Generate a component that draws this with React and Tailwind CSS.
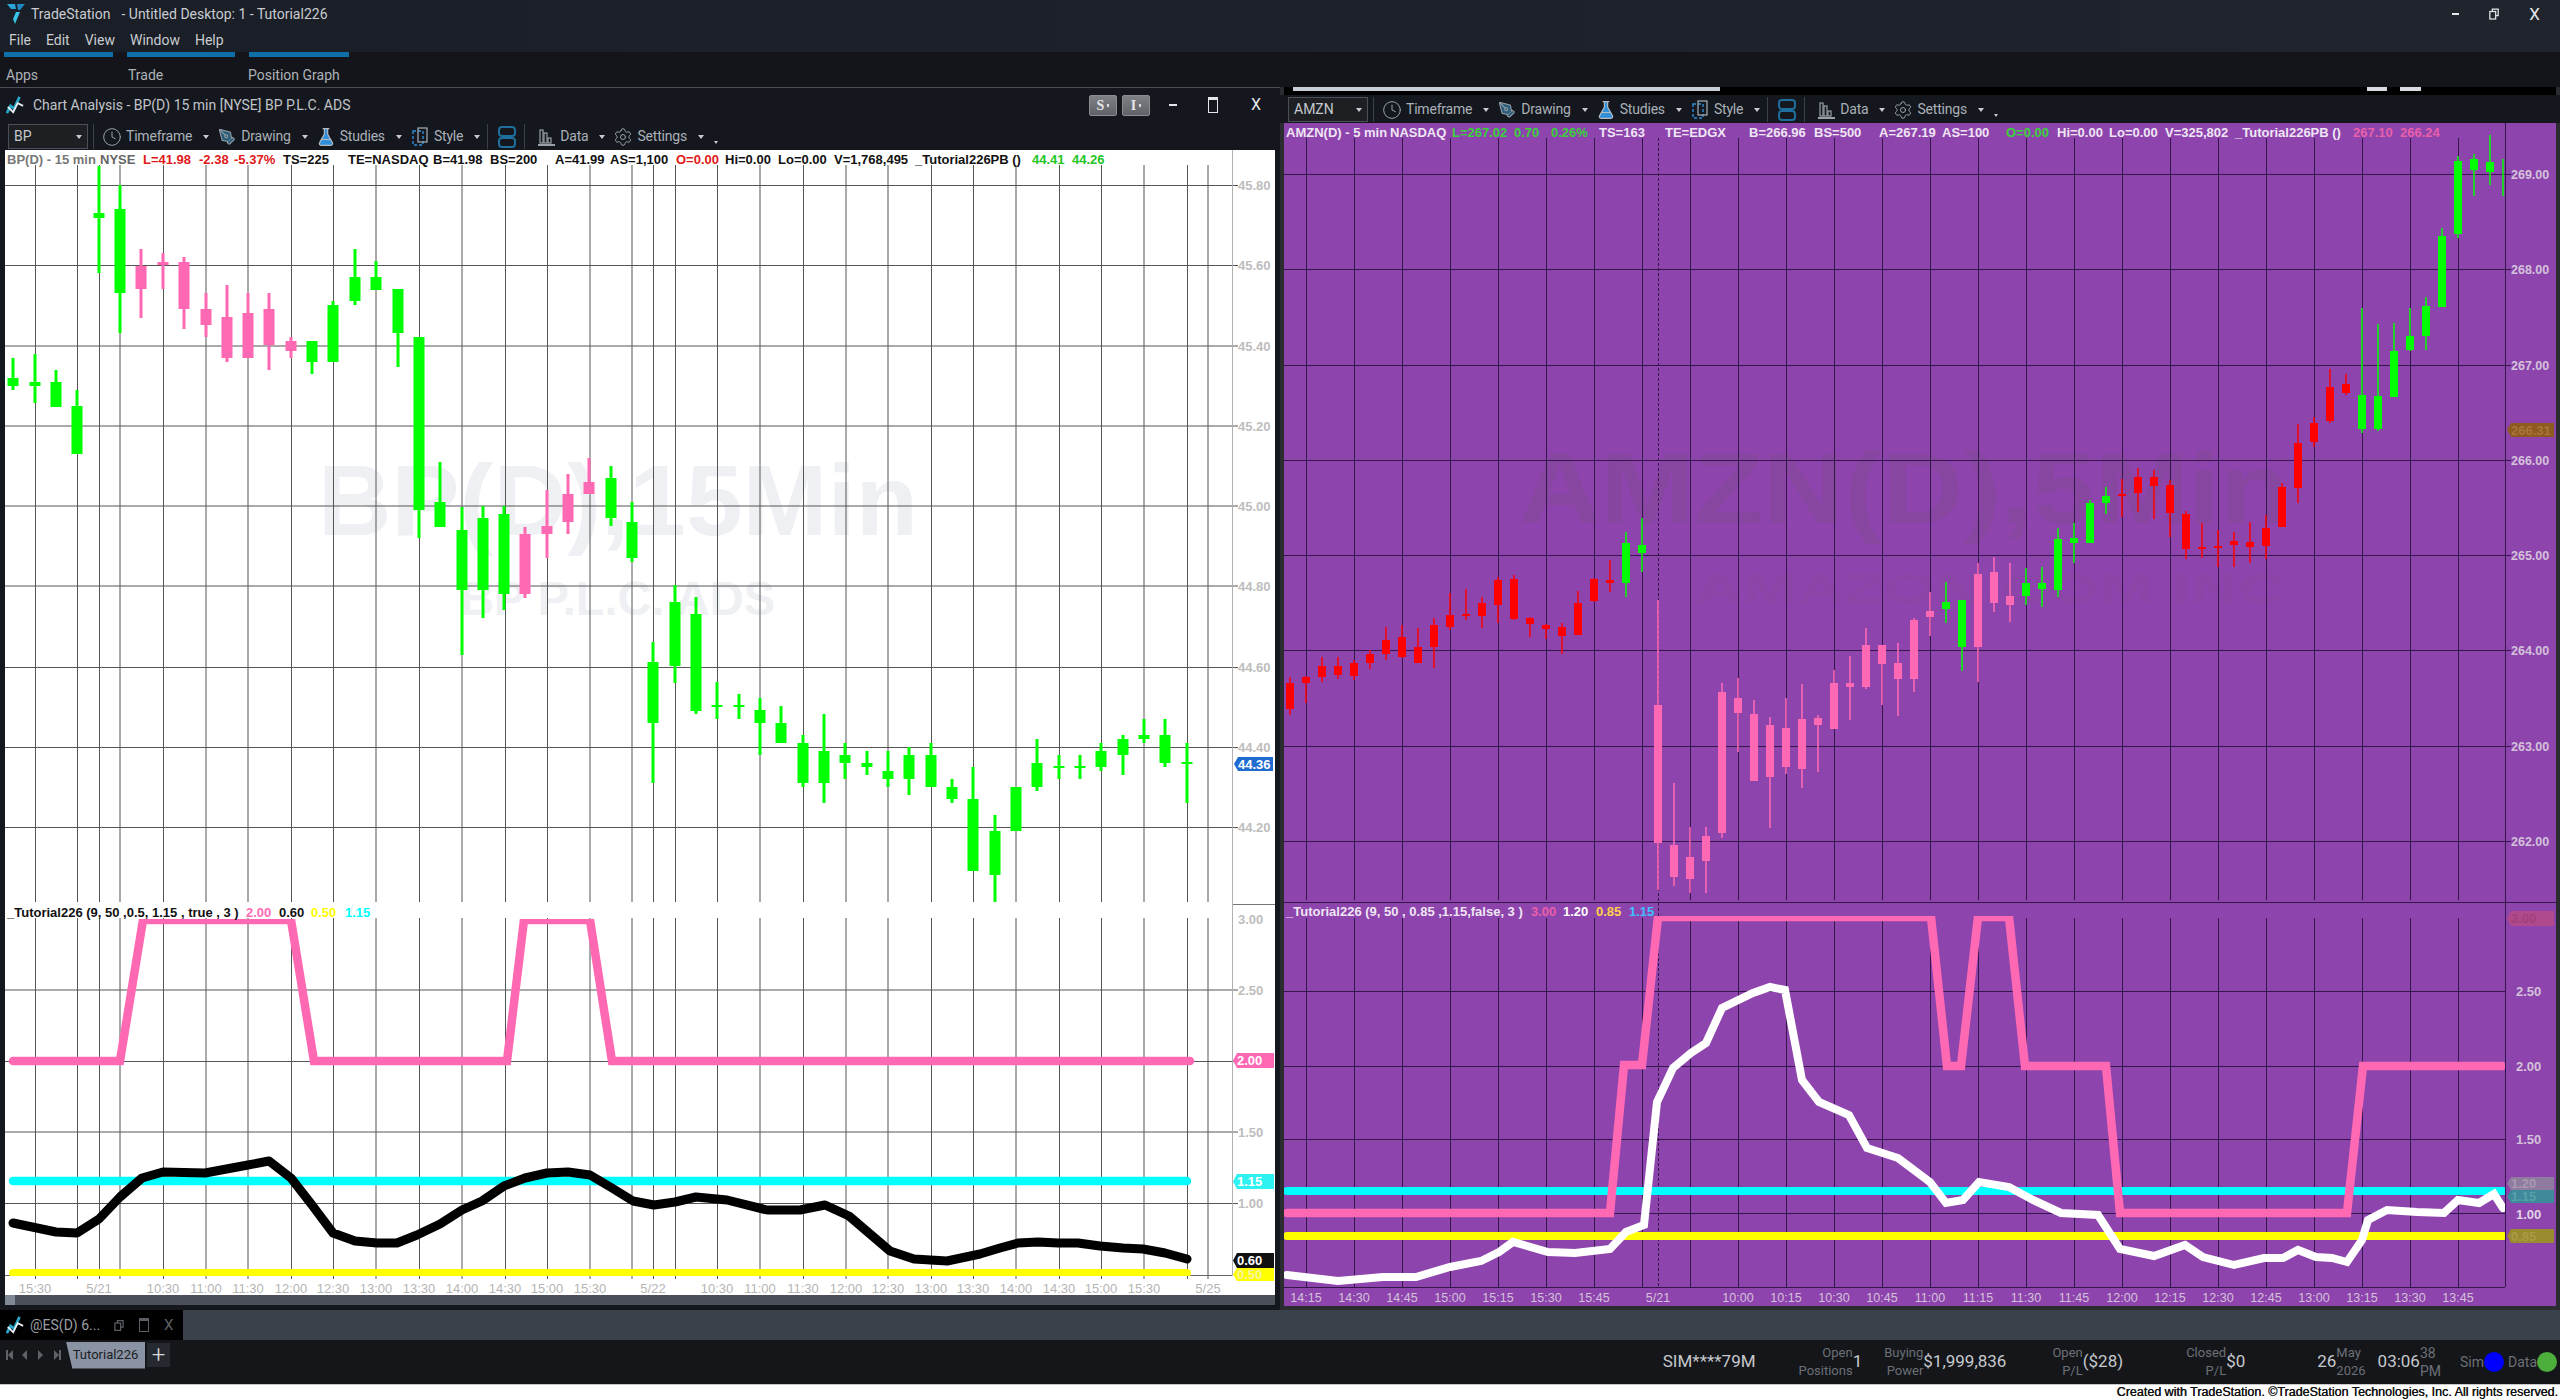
import { Clock, FlaskConical, PenTool, Settings } from 'lucide-react';

const GREEN = '#00ff00';
const PINK = '#ff69b4';
const RED = '#ff0000';

// [x, wickTop, wickBottom, bodyTop, bodyBottom]
const bpUp = [
  [13, 358, 390, 378, 386], [35, 354, 403, 382, 386], [56, 370, 407, 382, 407], [77, 390, 454, 406, 454],
  [99, 166, 273, 213, 218], [120, 185, 333, 209, 293], [312, 341, 374, 341, 362], [333, 301, 362, 305, 362],
  [355, 249, 305, 277, 301], [376, 261, 290, 277, 290], [398, 289, 367, 289, 333], [419, 337, 538, 337, 510],
  [440, 462, 527, 502, 527], [462, 507, 655, 530, 590], [483, 506, 618, 518, 590], [504, 506, 610, 514, 594],
  [611, 466, 526, 478, 518], [632, 502, 562, 522, 558], [653, 642, 783, 662, 723], [675, 585, 683, 602, 666],
  [696, 597, 714, 614, 711], [717, 682, 719, 705, 707], [739, 694, 719, 705, 707], [760, 698, 755, 710, 723],
  [781, 706, 743, 723, 743], [803, 735, 787, 743, 783], [824, 714, 803, 751, 783], [845, 743, 779, 755, 763],
  [867, 751, 775, 763, 767], [888, 751, 787, 771, 779], [909, 747, 795, 755, 779], [931, 743, 787, 755, 787],
  [952, 779, 803, 787, 799], [973, 767, 871, 799, 871], [995, 815, 902, 831, 875], [1016, 787, 831, 787, 831],
  [1037, 739, 791, 763, 787], [1059, 755, 779, 766, 768], [1080, 755, 779, 766, 768], [1101, 743, 771, 751, 767],
  [1123, 735, 775, 739, 755], [1144, 719, 743, 735, 739], [1165, 719, 767, 735, 763], [1187, 743, 803, 762, 764],
];
const bpDown = [
  [141, 249, 318, 266, 289], [163, 253, 289, 262, 265], [184, 257, 329, 262, 309], [206, 293, 337, 309, 325],
  [227, 285, 362, 317, 358], [248, 293, 358, 313, 358], [269, 293, 370, 309, 345], [291, 337, 358, 341, 351],
  [525, 527, 598, 534, 594], [547, 490, 558, 526, 534], [568, 474, 534, 494, 522], [589, 458, 494, 482, 494],
];
const amznRed = [
  [1290, 677, 715, 683, 709], [1306, 676, 703, 677, 683], [1322, 657, 682, 666, 677], [1338, 657, 679, 666, 675],
  [1354, 660, 680, 663, 676], [1370, 650, 669, 654, 663], [1386, 627, 660, 640, 654], [1402, 625, 658, 637, 657],
  [1418, 628, 663, 647, 663], [1434, 618, 668, 625, 647], [1450, 593, 630, 615, 627], [1466, 589, 620, 614, 616],
  [1482, 597, 628, 603, 616], [1498, 577, 623, 580, 605], [1514, 575, 620, 579, 619], [1530, 617, 637, 618, 624],
  [1546, 624, 639, 625, 629], [1562, 623, 654, 627, 636], [1578, 591, 635, 603, 635], [1594, 578, 602, 579, 601],
  [1610, 560, 592, 580, 583], [2122, 479, 517, 494, 496], [2138, 468, 512, 477, 493], [2154, 470, 519, 477, 486],
  [2170, 480, 537, 485, 513], [2186, 511, 559, 514, 549], [2202, 523, 558, 547, 549], [2218, 530, 567, 546, 548],
  [2234, 532, 567, 541, 545], [2250, 522, 563, 542, 547], [2266, 515, 559, 528, 546], [2282, 483, 527, 487, 527],
  [2298, 424, 503, 443, 488], [2314, 417, 447, 423, 442], [2330, 369, 423, 387, 421], [2346, 374, 395, 384, 393],
];
const amznPink = [
  [1658, 600, 890, 705, 843], [1674, 783, 886, 845, 877], [1690, 827, 893, 857, 879], [1706, 827, 893, 836, 861],
  [1722, 683, 838, 692, 833], [1738, 678, 752, 698, 713], [1754, 700, 781, 714, 781], [1770, 717, 828, 725, 777],
  [1786, 698, 774, 728, 767], [1802, 684, 788, 719, 769], [1818, 715, 772, 718, 725], [1834, 670, 729, 683, 729],
  [1850, 656, 720, 683, 687], [1866, 628, 689, 645, 687], [1882, 645, 705, 645, 664], [1898, 643, 716, 663, 679],
  [1914, 618, 692, 620, 679], [1930, 592, 636, 611, 617], [1978, 563, 682, 574, 647], [1994, 557, 612, 572, 603],
  [2010, 563, 622, 596, 605],
];
const amznGreen = [
  [1626, 532, 597, 543, 583], [1642, 518, 572, 545, 553], [1946, 582, 623, 602, 609], [1962, 600, 671, 600, 647],
  [2026, 568, 605, 583, 596], [2042, 567, 607, 583, 589], [2058, 528, 597, 539, 590], [2074, 523, 563, 538, 543],
  [2090, 500, 543, 503, 543], [2106, 487, 514, 496, 503], [2362, 308, 433, 395, 429], [2378, 324, 431, 396, 429],
  [2394, 323, 397, 351, 397], [2410, 308, 351, 336, 350], [2426, 297, 350, 306, 336], [2442, 228, 307, 236, 307],
  [2458, 156, 238, 161, 234], [2474, 154, 196, 159, 170], [2490, 135, 185, 162, 172], [2503, 159, 196, 176, 176],
];

const bpGridX = [35, 77, 99, 120, 163, 206, 248, 291, 333, 376, 419, 462, 505, 547, 590, 632, 653, 675, 717, 760, 803, 846, 888, 931, 973, 1016, 1059, 1101, 1144, 1187, 1208];
const bpTimes = [
  [35, '15:30'], [99, '5/21'], [163, '10:30'], [206, '11:00'], [248, '11:30'], [291, '12:00'], [333, '12:30'], [376, '13:00'], [419, '13:30'], [462, '14:00'],
  [505, '14:30'], [547, '15:00'], [590, '15:30'], [653, '5/22'], [717, '10:30'], [760, '11:00'], [803, '11:30'], [846, '12:00'], [888, '12:30'], [931, '13:00'],
  [973, '13:30'], [1016, '14:00'], [1059, '14:30'], [1101, '15:00'], [1144, '15:30'], [1208, '5/25'],
];
const bpPrices = [[185, '45.80'], [265, '45.60'], [346, '45.40'], [426, '45.20'], [506, '45.00'], [586, '44.80'], [667, '44.60'], [747, '44.40'], [827, '44.20']];
const bpSub = [[919, '3.00'], [990, '2.50'], [1132, '1.50'], [1203, '1.00']];

const amznGridX = [1306, 1354, 1402, 1450, 1498, 1546, 1594, 1642, 1690, 1738, 1786, 1834, 1882, 1930, 1978, 2026, 2074, 2122, 2170, 2218, 2266, 2314, 2362, 2410, 2458];
const amznTimes = [
  [1306, '14:15'], [1354, '14:30'], [1402, '14:45'], [1450, '15:00'], [1498, '15:15'], [1546, '15:30'], [1594, '15:45'], [1658, '5/21'], [1738, '10:00'], [1786, '10:15'],
  [1834, '10:30'], [1882, '10:45'], [1930, '11:00'], [1978, '11:15'], [2026, '11:30'], [2074, '11:45'], [2122, '12:00'], [2170, '12:15'], [2218, '12:30'], [2266, '12:45'],
  [2314, '13:00'], [2362, '13:15'], [2410, '13:30'], [2458, '13:45'],
];
const amznPrices = [[174, '269.00'], [269, '268.00'], [365, '267.00'], [460, '266.00'], [555, '265.00'], [650, '264.00'], [746, '263.00'], [841, '262.00']];

const bpBlack = '13,1223 56,1232 77,1233 99,1219 120,1197 142,1178 163,1172 205,1173 248,1165 269,1161 291,1178 312,1205 333,1233 355,1241 377,1243 397,1243 417,1235 440,1224 462,1210 482,1201 504,1186 525,1178 547,1173 568,1172 590,1175 612,1188 633,1201 654,1205 675,1202 696,1197 727,1200 767,1210 800,1210 825,1205 849,1216 890,1251 914,1259 947,1261 980,1254 1000,1248 1018,1243 1038,1242 1058,1243 1078,1243 1100,1246 1123,1248 1143,1249 1165,1253 1187,1259';
const bpPink = '13,1061 120,1061 143,920 291,920 314,1061 507,1061 524,920 590,920 612,1061 1190,1061';
const amznPinkLine = '1287,1213 1610,1213 1624,1065 1642,1065 1658,917 1931,917 1947,1066 1961,1066 1978,917 2009,917 2025,1066 2106,1066 2120,1213 2347,1213 2363,1066 2502,1066';
const amznWhite = '1287,1275 1338,1281 1383,1277 1416,1277 1450,1267 1481,1261 1499,1252 1513,1242 1548,1252 1575,1253 1610,1249 1626,1232 1644,1225 1657,1102 1673,1068 1691,1053 1706,1043 1722,1008 1753,993 1770,987 1785,990 1802,1080 1819,1102 1849,1115 1867,1148 1898,1158 1930,1182 1946,1203 1963,1200 1979,1182 2009,1187 2033,1200 2061,1213 2098,1215 2120,1249 2154,1256 2185,1245 2203,1257 2234,1265 2264,1258 2283,1258 2298,1250 2316,1257 2332,1258 2347,1262 2362,1240 2368,1220 2387,1210 2417,1212 2444,1213 2458,1200 2479,1203 2494,1194 2503,1208';

// odd coordinates land on a pixel, even ones straddle two: the dark/pale alternation of the scaled-up capture
const snap = (v) => (v % 2 ? v + 0.5 : v);

function Candles({ data, color, body, wick }) {
  return data.map(([x, wt, wb, bt, bb]) => (
    <g key={x} fill={color}>
      <rect x={x - wick / 2} y={wt} width={wick} height={wb - wt} />
      {bb > bt && <rect x={x - body / 2} y={bt} width={body} height={bb - bt} />}
    </g>
  ));
}

function Label({ x, y, fill, anchor, weight = 700, size = 13, children }) {
  return (
    <text x={x} y={y + 4.5} fill={fill} textAnchor={anchor} fontSize={size} fontWeight={weight}>
      {children}
    </text>
  );
}

function Tag({ x, y, w, h, bg, fill, children }) {
  return (
    <g>
      <polygon points={`${x},${y + h / 2} ${x + 4},${y} ${x + w},${y} ${x + w},${y + h} ${x + 4},${y + h}`} fill={bg} />
      <text x={x + 4} y={y + h / 2 + 4.5} fill={fill} fontSize="13" fontWeight="700">{children}</text>
    </g>
  );
}

function BpChart() {
  const head = [
    [7, 'BP(D) - 15 min', '#777777'], [100, 'NYSE', '#666666'], [143, 'L=41.98', '#e01818'], [199, '-2.38', '#e01818'], [234, '-5.37%', '#e01818'],
    [283, 'TS=225', '#111111'], [348, 'TE=NASDAQ', '#111111'], [433, 'B=41.98', '#111111'], [490, 'BS=200', '#111111'], [555, 'A=41.99', '#111111'],
    [610, 'AS=1,100', '#111111'], [676, 'O=0.00', '#e01818'], [725, 'Hi=0.00', '#111111'], [778, 'Lo=0.00', '#111111'], [834, 'V=1,768,495', '#111111'],
    [915, '_Tutorial226PB ()', '#111111'], [1032, '44.41', '#22c522'], [1072, '44.26', '#22c522'],
  ];
  return (
    <svg viewBox="5 150 1270 1145" className="block w-[1270px] h-[1145px] bg-white font-['Liberation_Sans',sans-serif]">
      <defs>
        <clipPath id="bpSubClip"><rect x="5" y="919" width="1227" height="357" /></clipPath>
      </defs>
      <text x="318" y="535" fontSize="100" fontWeight="700" fill="#eef0f4" textLength="600" lengthAdjust="spacingAndGlyphs">BP(D),15Min</text>
      <text x="460" y="615" fontSize="48" fontWeight="700" fill="#eef0f4" textLength="315" lengthAdjust="spacingAndGlyphs">BP P.L.C. ADS</text>
      {bpPrices.map(([y]) => <line key={y} x1="5" x2="1238" y1={snap(y)} y2={snap(y)} stroke="#555555" />)}
      {[990, 1061, 1132, 1203].map((y) => <line key={y} x1="5" x2="1238" y1={snap(y)} y2={snap(y)} stroke="#555555" />)}
      <line x1="5" x2="1232" y1="1275.5" y2="1275.5" stroke="#666666" />
      <line x1="1232" x2="1275" y1="904.5" y2="904.5" stroke="#777777" />
      <line x1="1232.5" x2="1232.5" y1="150" y2="1276" stroke="#b0b0b0" />
      {bpGridX.map((x) => (
        <g key={x} stroke="#555555">
          <line x1={snap(x)} x2={snap(x)} y1="165" y2="902" />
          <line x1={snap(x)} x2={snap(x)} y1="918" y2="1279" />
        </g>
      ))}
      <Candles data={bpUp} color={GREEN} body={11} wick={3} />
      <Candles data={bpDown} color={PINK} body={11} wick={3} />
      <g clipPath="url(#bpSubClip)" fill="none">
        <polyline points={bpPink} stroke={PINK} strokeWidth="8.5" strokeLinecap="round" />
        <line x1="13" x2="1187" y1="1181" y2="1181" stroke="#00ffff" strokeWidth="8.5" strokeLinecap="round" />
        <polyline points={bpBlack} stroke="#000000" strokeWidth="9" strokeLinecap="round" strokeLinejoin="round" />
        <line x1="13" x2="1187" y1="1273" y2="1273" stroke="#ffff00" strokeWidth="8" strokeLinecap="round" />
      </g>
      {head.map(([x, t, c]) => <Label key={x} x={x} y={159} fill={c}>{t}</Label>)}
      <Label x={7} y={912} fill="#111111">_Tutorial226 (9, 50 ,0.5, 1.15 , true , 3 )</Label>
      <Label x={246} y={912} fill={PINK}>2.00</Label>
      <Label x={279} y={912} fill="#111111">0.60</Label>
      <Label x={311} y={912} fill="#ffff00">0.50</Label>
      <Label x={345} y={912} fill="#00ffff">1.15</Label>
      {bpPrices.map(([y, t]) => <Label key={t} x={1238} y={y} fill="#bdbdbd">{t}</Label>)}
      {bpSub.map(([y, t]) => <Label key={t} x={1238} y={y} fill="#bdbdbd">{t}</Label>)}
      <Tag x={1234} y={757} w={39} h={14} bg="#1f6bd0" fill="#ffffff">44.36</Tag>
      <Tag x={1233} y={1053} w={41} h={15} bg={PINK} fill="#ffffff">2.00</Tag>
      <Tag x={1233} y={1174} w={41} h={15} bg="#2ef2f2" fill="#ffffff">1.15</Tag>
      <Tag x={1233} y={1253} w={41} h={15} bg="#111111" fill="#ffffff">0.60</Tag>
      <Tag x={1233} y={1268} w={41} h={13} bg="#ffff00" fill="#f5f5a0">0.50</Tag>
      {bpTimes.map(([x, t]) => <Label key={x + t} x={x} y={1288} fill="#b5b5b5" anchor="middle" weight={400}>{t}</Label>)}
    </svg>
  );
}

function AmznChart() {
  const head = [
    [1286, 'AMZN(D) - 5 min', '#efe6f4'], [1390, 'NASDAQ', '#efe6f4'], [1452, 'L=267.02', '#39d13a'], [1514, '0.70', '#39d13a'], [1551, '0.26%', '#39d13a'],
    [1599, 'TS=163', '#efe6f4'], [1665, 'TE=EDGX', '#efe6f4'], [1749, 'B=266.96', '#efe6f4'], [1814, 'BS=500', '#efe6f4'], [1879, 'A=267.19', '#efe6f4'],
    [1942, 'AS=100', '#efe6f4'], [2006, 'O=0.00', '#39d13a'], [2057, 'Hi=0.00', '#efe6f4'], [2109, 'Lo=0.00', '#efe6f4'], [2165, 'V=325,802', '#efe6f4'],
    [2235, '_Tutorial226PB ()', '#efe6f4'], [2353, '267.10', '#e860a8'], [2400, '266.24', '#e860a8'],
  ];
  return (
    <svg viewBox="1284 123 1272 1183" className="block w-[1272px] h-[1183px] bg-[#8e44ad] font-['Liberation_Sans',sans-serif]">
      <defs>
        <clipPath id="amznSubClip"><rect x="1284" y="916" width="1221" height="371" /></clipPath>
      </defs>
      <text x="1519" y="523" fontSize="100" fontWeight="700" fill="#87469f" textLength="770" lengthAdjust="spacingAndGlyphs">AMZN(D),5Min</text>
      <text x="1695" y="603" fontSize="42" fontWeight="700" fill="#8a45a6" textLength="590" lengthAdjust="spacingAndGlyphs">AMAZON.COM INC</text>
      {amznPrices.map(([y]) => <line key={y} x1="1284" x2="2511" y1={y + 0.5} y2={y + 0.5} stroke="#35164a" />)}
      {[991, 1066, 1139, 1213, 1287].map((y) => <line key={y} x1="1284" x2="2505" y1={y + 0.5} y2={y + 0.5} stroke="#35164a" />)}
      <line x1="2505.5" x2="2505.5" y1="123" y2="1287" stroke="#35164a" />
      <line x1="1284" x2="2556" y1="902.5" y2="902.5" stroke="#35164a" />
      {amznGridX.map((x) => (
        <g key={x} stroke="#35164a">
          <line x1={x + 0.5} x2={x + 0.5} y1="138" y2="900" />
          <line x1={x + 0.5} x2={x + 0.5} y1="918" y2="1287" />
        </g>
      ))}
      <line x1="1658.5" x2="1658.5" y1="138" y2="1287" stroke="#35164a" strokeDasharray="3 2" />
      <Candles data={amznRed} color={RED} body={8} wick={1.5} />
      <Candles data={amznPink} color={PINK} body={8} wick={1.5} />
      <Candles data={amznGreen} color={GREEN} body={8} wick={1.5} />
      <g clipPath="url(#amznSubClip)" fill="none">
        <line x1="1287" x2="2503" y1="1191" y2="1191" stroke="#00ffff" strokeWidth="8" strokeLinecap="round" />
        <polyline points={amznPinkLine} stroke={PINK} strokeWidth="8.5" strokeLinecap="round" />
        <line x1="1287" x2="2503" y1="1236" y2="1236" stroke="#ffff00" strokeWidth="8" strokeLinecap="round" />
        <polyline points={amznWhite} stroke="#ffffff" strokeWidth="8" strokeLinecap="round" />
      </g>
      {head.map(([x, t, c]) => <Label key={x} x={x} y={132} fill={c}>{t}</Label>)}
      <Label x={1286} y={911} fill="#efe6f4">_Tutorial226 (9, 50 , 0.85 ,1.15,false, 3 )</Label>
      <Label x={1531} y={911} fill="#e860a8">3.00</Label>
      <Label x={1563} y={911} fill="#ffffff">1.20</Label>
      <Label x={1596} y={911} fill="#ffd24a">0.85</Label>
      <Label x={1629} y={911} fill="#3ec0ff">1.15</Label>
      {amznPrices.map(([y, t]) => <Label key={t} x={2511} y={y} fill="#d3c2da" size={12.5}>{t}</Label>)}
      <Tag x={2507} y={423} w={47} h={14} bg="#8e5a20" fill="#a8763a">266.31</Tag>
      <Tag x={2507} y={911} w={47} h={15} bg="#b04a8c" fill="#a0407a">3.00</Tag>
      <Label x={2516} y={991} fill="#d3c2da">2.50</Label>
      <Label x={2516} y={1066} fill="#d3c2da">2.00</Label>
      <Label x={2516} y={1139} fill="#d3c2da">1.50</Label>
      <Tag x={2507} y={1177} w={47} h={13} bg="#8f7aa0" fill="#a89ab0">1.20</Tag>
      <Tag x={2507} y={1190} w={47} h={13} bg="#3f8a9a" fill="#55a0ac">1.15</Tag>
      <Label x={2516} y={1214} fill="#e0d4e6">1.00</Label>
      <Tag x={2507} y={1229} w={47} h={14} bg="#9a8a30" fill="#aa9a45">0.85</Tag>
      {amznTimes.map(([x, t]) => <Label key={x + t} x={x} y={1297} fill="#d3c2da" anchor="middle" weight={400} size={12.5}>{t}</Label>)}
    </svg>
  );
}

function ChartIcon() {
  return (
    <svg viewBox="0 0 20 22" className="w-[18px] h-[20px]">
      <path d="M1 20 L5 12 L9 15 L15 2" fill="none" stroke="#27a7c9" strokeWidth="3" />
      <path d="M2 13 L8 19 L13 9 L19 12" fill="none" stroke="#e8eef3" strokeWidth="2" />
    </svg>
  );
}

function LogoIcon() {
  return (
    <svg viewBox="0 0 18 20" className="w-[18px] h-[20px]">
      <path d="M0 0 H8 L9 5 H4 Z" fill="#2aa6d8" />
      <path d="M10 0 H18 L13 6 H11 Z" fill="#1d88c4" />
      <path d="M9 8 L13 8 L8 20 L6 15 Z" fill="#35c3e8" />
    </svg>
  );
}

function ToolItem({ icon, label }) {
  return (
    <div className="flex items-center mr-[8px]">
      <span className="flex w-[20px] h-[20px] items-center justify-center">{icon}</span>
      <span className="ml-[4px] text-[14px] tracking-[-0.2px] text-[#aab0b8]">{label}</span>
      <span className="ml-[11px] w-0 h-0 border-x-[3px] border-t-[4px] border-x-transparent border-t-[#c8ccd2]" />
    </div>
  );
}

function Toolbar({ symbol }) {
  return (
    <div className="flex h-[28px] items-center bg-[#14171d] pl-[8px] pt-[1px]">
      <div className="flex h-[25px] w-[80px] items-center justify-between border border-[#4b4f57] bg-[#1d1f23] px-[5px] text-[14px] text-[#c4c8ce]">
        {symbol}
        <span className="w-0 h-0 border-x-[3px] border-t-[4px] border-x-transparent border-t-[#c8ccd2]" />
      </div>
      <span className="ml-[5px] mr-[8px] h-[25px] w-px bg-[#3b3f46]" />
      <ToolItem icon={<Clock size={20} strokeWidth={1.2} color="#9aa0a8" />} label="Timeframe" />
      <ToolItem icon={<PenTool size={18} strokeWidth={1.4} color="#9aa0a8" fill="#2a5d78" />} label="Drawing" />
      <ToolItem icon={<FlaskConical size={20} strokeWidth={1.4} color="#b7bcc2" fill="#2f8fd8" />} label="Studies" />
      <ToolItem
        icon={
          <svg viewBox="0 0 20 20" className="w-[20px] h-[20px]" fill="none">
            <rect x="3" y="4" width="10" height="14" stroke="#2f8fd8" strokeWidth="1.4" strokeDasharray="3 2" />
            <rect x="8" y="1" width="9" height="14" stroke="#aab0b8" strokeWidth="1.2" />
          </svg>
        }
        label="Style"
      />
      <span className="ml-[-1px] h-[25px] w-px bg-[#3b3f46]" />
      <svg viewBox="0 0 18 22" className="ml-[10px] w-[18px] h-[22px]" fill="none" stroke="#1f6f9c" strokeWidth="2">
        <rect x="1" y="1" width="16" height="9" rx="3" />
        <rect x="1" y="12" width="16" height="9" rx="3" />
      </svg>
      <span className="ml-[8px] mr-[11px] h-[25px] w-px bg-[#3b3f46]" />
      <ToolItem
        icon={
          <svg viewBox="0 0 20 20" className="w-[20px] h-[20px]" fill="none" stroke="#9aa0a8" strokeWidth="1.2">
            <rect x="4" y="3" width="3" height="13" />
            <rect x="8" y="6" width="3" height="10" />
            <rect x="12" y="11" width="3" height="5" />
            <path d="M2 18 H19" strokeWidth="2" />
          </svg>
        }
        label="Data"
      />
      <ToolItem icon={<Settings size={20} strokeWidth={1.2} color="#9aa0a8" />} label="Settings" />
      <span className="ml-[2px] mt-[12px] w-0 h-0 border-x-[2px] border-t-[3px] border-x-transparent border-t-[#c8ccd2]" />
    </div>
  );
}

function Stat({ top, bottom, value, className }) {
  return (
    <div className={`flex items-center ${className}`}>
      <div className="flex flex-col items-end text-[13px] leading-[18px] text-[#6c7077]">
        <span>{top}</span>
        <span>{bottom}</span>
      </div>
      <span className="text-[17px] text-[#c6c9cd]">{value}</span>
    </div>
  );
}

function Tab({ className }) {
  return <div className={`h-[5px] bg-[#0f6fa8] ${className}`} />;
}

function SplitButton({ letter, className }) {
  return (
    <span className={`flex h-[21px] w-[28px] items-center justify-center gap-[3px] rounded-[2px] border border-[#8a8d92] bg-gradient-to-b from-[#7d8084] to-[#5f6266] font-['Liberation_Serif',serif] text-[14px] font-bold ${className}`}>
      {letter}
      <span className="h-[3px] w-[2px] bg-[#d8dadd]" />
    </span>
  );
}

function NavArrows() {
  return (
    <svg viewBox="0 0 56 12" className="w-[56px] h-[12px]" fill="#5f6368">
      <rect x="0" y="1" width="2" height="10" />
      <path d="M7 1 V11 L2 6 Z" />
      <path d="M21 1 V11 L16 6 Z" />
      <path d="M32 1 V11 L37 6 Z" />
      <path d="M48 1 V11 L53 6 Z" />
      <rect x="53" y="1" width="2" height="10" />
    </svg>
  );
}

export default function App() {
  return (
    <div className="flex h-[1400px] w-[2560px] flex-col overflow-hidden bg-white font-['Roboto',sans-serif]">
      <header className="flex h-[52px] flex-col bg-gradient-to-r from-[#1a1e26] to-[#20252d] pl-[7px] text-[#c9ccd1]">
        <div className="flex h-[28px] items-center">
          <LogoIcon />
          <span className="ml-[6px] text-[14px]">TradeStation</span>
          <span className="ml-[11px] text-[14px]">- Untitled Desktop: 1 - Tutorial226</span>
          <div className="ml-auto flex items-center gap-[30px] pr-[20px] text-[#e4e6ea]">
            <span className="h-[2px] w-[7px] bg-[#e4e6ea]" />
            <svg viewBox="0 0 12 16" className="w-[10px] h-[14px]" fill="none" stroke="#e4e6ea" strokeWidth="1.5">
              <rect x="1" y="5" width="7" height="9" />
              <path d="M4 5 V2 H11 V10 H8" />
            </svg>
            <span className="text-[17px] leading-none">X</span>
          </div>
        </div>
        <nav className="flex h-[24px] items-center pl-[2px] text-[14px]">
          <span>File</span>
          <span className="ml-[15px]">Edit</span>
          <span className="ml-[15px]">View</span>
          <span className="ml-[15px]">Window</span>
          <span className="ml-[15px]">Help</span>
        </nav>
      </header>
      <div className="h-[35px] bg-[#13151a] text-[14px] text-[#aeb2b8]">
        <div className="flex gap-[14px] pl-[4px]">
          <Tab className="w-[109px]" />
          <Tab className="w-[108px]" />
          <Tab className="w-[100px]" />
        </div>
        <div className="mt-[8px] flex">
          <span className="w-[127px] pl-[6px]">Apps</span>
          <span className="w-[121px] pl-[1px]">Trade</span>
          <span>Position Graph</span>
        </div>
      </div>

      <main className="flex h-[1223px]">
        <section className="flex w-[1280px] flex-col border-t border-[#4a4e55] bg-[#14171d]">
          <div className="flex h-[34px] items-center pl-[6px] text-[14px] text-[#c0c4ca]">
            <ChartIcon />
            <span className="ml-[9px]">Chart Analysis - BP(D) 15 min [NYSE] BP P.L.C. ADS</span>
            <div className="ml-auto flex items-center pr-[19px] text-[#e4e6ea]">
              <SplitButton letter="S" />
              <SplitButton letter="I" className="ml-[5px]" />
              <span className="ml-[19px] h-[2px] w-[8px] bg-[#e4e6ea]" />
              <span className="ml-[31px] h-[16px] w-[10px] border border-[#e4e6ea] border-t-[3px]" />
              <span className="ml-[33px] text-[16px] leading-none">X</span>
            </div>
          </div>
          <Toolbar symbol="BP" />
          <div className="flex flex-col pl-[5px] pr-[5px]">
            <BpChart />
            <div className="h-[10px] bg-[#4a4f58]">
              <div className="h-[10px] w-[10px] bg-[#7f8896]" />
            </div>
          </div>
        </section>

        <section className="flex w-[1280px] flex-col bg-[#2b2c30] pl-[4px] pr-[4px]">
          <div className="flex h-[8px] bg-black">
            <span className="ml-[9px] h-[4px] w-[427px] bg-[#c8ced8]" />
            <span className="ml-[647px] h-[4px] w-[20px] bg-[#d8dce2]" />
            <span className="ml-[13px] h-[4px] w-[21px] bg-[#d8dce2]" />
          </div>
          <div className="-ml-[4px] -mr-[4px]">
            <Toolbar symbol="AMZN" />
          </div>
          <AmznChart />
        </section>
      </main>

      <div className="h-[30px] bg-[#3a414b]">
        <div className="flex h-[30px] w-[183px] items-center bg-black pl-[6px] text-[14px] text-[#9a9ea4]">
          <ChartIcon />
          <span className="ml-[6px]">@ES(D) 6...</span>
          <svg viewBox="0 0 12 16" className="ml-[14px] w-[10px] h-[13px]" fill="none" stroke="#5c6066" strokeWidth="1.5">
            <rect x="1" y="5" width="7" height="9" />
            <path d="M4 5 V2 H11 V10 H8" />
          </svg>
          <span className="ml-[15px] h-[14px] w-[10px] border border-t-[3px] border-[#5c6066]" />
          <span className="ml-[15px] text-[15px] text-[#5c6066]">X</span>
        </div>
      </div>

      <footer className="flex h-[44px] items-start bg-[#14161a] pr-[3px]">
        <div className="flex h-[30px] items-center pl-[6px]">
          <NavArrows />
          <div className="ml-[4px] flex h-[27px] w-[79px] items-center justify-center bg-[#8a93a3] text-[13px] text-[#1b1e23] [clip-path:polygon(0_0,100%_0,100%_100%,8%_100%)]">Tutorial226</div>
          <div className="ml-[2px] flex h-[24px] w-[23px] items-center justify-center bg-[#262a30] text-[24px] font-light leading-none text-[#d8dbdf]">+</div>
        </div>
        <div className="ml-auto flex h-[44px] items-center">
          <span className="text-[17px] text-[#c6c9cd]">SIM****79M</span>
          <Stat top="Open" bottom="Positions" value="1" className="ml-[43px]" />
          <Stat top="Buying" bottom="Power" value="$1,999,836" className="ml-[22px]" />
          <Stat top="Open" bottom="P/L" value="($28)" className="ml-[46px]" />
          <Stat top="Closed" bottom="P/L" value="$0" className="ml-[63px]" />
          <span className="ml-[72px] text-[17px] text-[#c6c9cd]">26</span>
          <div className="flex flex-col text-[13px] leading-[18px] text-[#6c7077]">
            <span>May</span>
            <span>2026</span>
          </div>
          <span className="ml-[12px] text-[17px] text-[#c6c9cd]">03:06</span>
          <div className="flex flex-col text-[14px] leading-[18px] text-[#6c7077]">
            <span>38</span>
            <span>PM</span>
          </div>
          <span className="ml-[19px] text-[14px] text-[#6c7077]">Sim</span>
          <span className="h-[20px] w-[20px] rounded-full bg-[#0000ff]" />
          <span className="ml-[4px] text-[14px] text-[#6c7077]">Data</span>
          <span className="h-[20px] w-[20px] rounded-full bg-[#4caf3c]" />
        </div>
      </footer>
      <div className="flex h-[16px] items-center justify-end border-t border-[#c8c8c8] pr-[2px] font-['Liberation_Sans',sans-serif] text-[12.5px] leading-none text-[#111111] [text-shadow:0.3px_0_0_#111]">
        Created with TradeStation. ©TradeStation Technologies, Inc. All rights reserved.
      </div>
    </div>
  );
}
